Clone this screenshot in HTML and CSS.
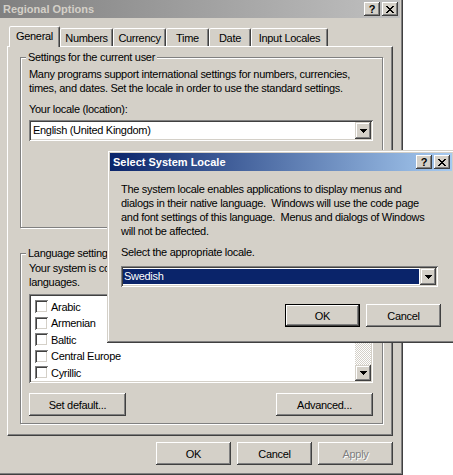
FILE: index.html
```html
<!DOCTYPE html>
<html>
<head>
<meta charset="utf-8">
<title>Regional Options</title>
<link rel="stylesheet" href="styles.css">
</head>
<body>
<div class="win main">
  <div class="title inactive">
    <span class="title-text">Regional Options</span>
    <div class="tbtns">
      <span class="tbtn help">?</span>
      <span class="tbtn close"><svg width="8" height="7" viewBox="0 0 8 7" shape-rendering="crispEdges"><path d="M0 0h2v1h-2zM6 0h2v1h-2zM1 1h2v1h-2zM5 1h2v1h-2zM2 2h4v1h-4zM3 3h2v1h-2zM2 4h4v1h-4zM1 5h2v1h-2zM5 5h2v1h-2zM0 6h2v1h-2zM6 6h2v1h-2z" fill="#000"/></svg></span>
    </div>
  </div>
  <div class="tabs">
    <div class="tab sel t-gen">General</div>
    <div class="tab t-num">Numbers</div>
    <div class="tab t-cur">Currency</div>
    <div class="tab t-time">Time</div>
    <div class="tab t-date">Date</div>
    <div class="tab t-inp">Input Locales</div>
  </div>
  <div class="panel">
    <fieldset class="group g1">
      <legend>Settings for the current user</legend>
      <p class="txt">Many programs support international settings for numbers, currencies,<br>times, and dates. Set the locale in order to use the standard settings.</p>
      <div class="label">Your locale (location):</div>
      <div class="combo">
        <div class="combo-val">English (United Kingdom)</div>
        <div class="dd"><svg width="7" height="4" viewBox="0 0 7 4" shape-rendering="crispEdges"><path d="M0 0h7v1h-7zM1 1h5v1h-5zM2 2h3v1h-3zM3 3h1v1h-1z" fill="#000"/></svg></div>
      </div>
    </fieldset>
    <fieldset class="group g2">
      <legend>Language settings for the system</legend>
      <p class="txt">Your system is configured to read and write documents in multiple<br>languages.</p>
      <div class="list">
        <div class="items">
          <div class="item"><span class="chk"></span>Arabic</div>
          <div class="item"><span class="chk"></span>Armenian</div>
          <div class="item"><span class="chk"></span>Baltic</div>
          <div class="item"><span class="chk"></span>Central Europe</div>
          <div class="item"><span class="chk"></span>Cyrillic</div>
        </div>
        <div class="sb">
          <div class="sbbtn"><svg width="7" height="4" viewBox="0 0 7 4" shape-rendering="crispEdges"><path d="M3 0h1v1h-1zM2 1h3v1h-3zM1 2h5v1h-5zM0 3h7v1h-7z" fill="#000"/></svg></div>
          <div class="thumb"></div>
          <div class="track"></div>
          <div class="sbbtn"><svg width="7" height="4" viewBox="0 0 7 4" shape-rendering="crispEdges"><path d="M0 0h7v1h-7zM1 1h5v1h-5zM2 2h3v1h-3zM3 3h1v1h-1z" fill="#000"/></svg></div>
        </div>
      </div>
      <div class="btnrow">
        <button class="btn wide">Set default...</button>
        <button class="btn wide">Advanced...</button>
      </div>
    </fieldset>
  </div>
  <div class="footer">
    <button class="btn">OK</button>
    <button class="btn">Cancel</button>
    <button class="btn dis">Apply</button>
  </div>
</div>

<div class="win dlg">
  <div class="title active">
    <span class="title-text">Select System Locale</span>
    <div class="tbtns">
      <span class="tbtn help">?</span>
      <span class="tbtn close"><svg width="8" height="7" viewBox="0 0 8 7" shape-rendering="crispEdges"><path d="M0 0h2v1h-2zM6 0h2v1h-2zM1 1h2v1h-2zM5 1h2v1h-2zM2 2h4v1h-4zM3 3h2v1h-2zM2 4h4v1h-4zM1 5h2v1h-2zM5 5h2v1h-2zM0 6h2v1h-2zM6 6h2v1h-2z" fill="#000"/></svg></span>
    </div>
  </div>
  <div class="dbody">
    <p class="txt">The system locale enables applications to display menus and<br>dialogs in their native language.&nbsp; Windows will use the code page<br>and font settings of this language.&nbsp; Menus and dialogs of Windows<br>will not be affected.</p>
    <div class="label dlabel">Select the appropriate locale.</div>
    <div class="combo dcombo">
      <div class="combo-val sel">Swedish</div>
      <div class="dd"><svg width="7" height="4" viewBox="0 0 7 4" shape-rendering="crispEdges"><path d="M0 0h7v1h-7zM1 1h5v1h-5zM2 2h3v1h-3zM3 3h1v1h-1z" fill="#000"/></svg></div>
    </div>
    <div class="dbtns">
      <button class="btn def">OK</button>
      <button class="btn">Cancel</button>
    </div>
  </div>
</div>
</body>
</html>
```
FILE: styles.css
```css
* { box-sizing: border-box; }
html, body { margin: 0; padding: 0; }
body {
  width: 453px;
  height: 475px;
  overflow: hidden;
  position: relative;
  background: #fff;
  font-family: "Liberation Sans", Arial, sans-serif;
  font-size: 11px;
  line-height: 14px;
  letter-spacing: -0.3px;
  color: #000;
}

/* windows */
.win {
  position: absolute;
  background: #d4d0c8;
  padding: 3px;
  display: flex;
  flex-direction: column;
  box-shadow: inset -1px -1px #404040, inset 1px 1px #d4d0c8, inset -2px -2px #808080, inset 2px 2px #fff;
}
.main { left: -3px; top: -3px; width: 406px; height: 478px; }
.dlg { left: 107px; top: 150px; width: 348px; height: 193px; }

.title {
  flex: none;
  height: 18px;
  display: flex;
  align-items: center;
  justify-content: space-between;
  padding: 0 2px 0 3px;
  font-weight: bold;
  letter-spacing: 0;
}
.title.inactive { background: linear-gradient(to right, #808080, #c0c0c0); color: #d4d0c8; }
.title.active { background: linear-gradient(to right, #0a246a, #a6caf0); color: #fff; }
.tbtns { display: flex; }
.tbtn {
  width: 16px;
  height: 14px;
  background: #d4d0c8;
  color: #000;
  display: flex;
  align-items: center;
  justify-content: center;
  box-shadow: inset -1px -1px #404040, inset 1px 1px #fff, inset -2px -2px #808080, inset 2px 2px #d4d0c8;
  font-size: 11px;
  line-height: 11px;
  font-weight: bold;
}
.tbtn.close { margin-left: 2px; }

/* tabs */
.tabs {
  flex: none;
  height: 20px;
  margin-top: 8px;
  padding-left: 9px;
  display: flex;
  align-items: flex-end;
}
.tab {
  height: 18px;
  display: flex;
  align-items: center;
  justify-content: center;
  border: 1px solid;
  border-bottom: 0;
  border-color: #fff #404040 transparent #fff;
  border-radius: 2px 2px 0 0;
  box-shadow: inset -1px 0 #808080;
  background: #d4d0c8;
}
.tab.sel {
  height: 21px;
  margin-bottom: -1px;
  padding-bottom: 2px;
  position: relative;
  z-index: 1;
}
.t-gen { width: 51px; }
.t-num { width: 53px; }
.t-cur { width: 53px; }
.t-time { width: 43px; }
.t-date { width: 42px; }
.t-inp { width: 77px; }

.panel {
  flex: none;
  height: 390px;
  margin: 0 7px;
  padding: 4px 9px 0 12px;
  border-top: 1px solid #fff;
  border-left: 1px solid #fff;
  border-right: 1px solid #404040;
  border-bottom: 1px solid #404040;
  box-shadow: inset -1px -1px #808080;
}

/* group boxes */
.group {
  margin: 0;
  min-width: 0;
  border: 1px solid #808080;
  box-shadow: inset 1px 1px #fff, 1px 1px 0 #fff;
  padding: 3px 9px 86px 8px;
}
.group legend {
  padding: 0 2px;
  margin-left: -3px;
  line-height: 13px;
  background: #d4d0c8;
}
.g2 { margin-top: 19px; padding: 1px 9px 7px 8px; }
.txt { margin: 0; line-height: 14px; }
.label { margin-top: 7px; }

/* combo */
.combo {
  height: 21px;
  margin-top: 4px;
  display: flex;
  padding: 2px;
  background: #fff;
  box-shadow: inset 1px 1px #808080, inset -1px -1px #fff, inset 2px 2px #404040, inset -2px -2px #d4d0c8;
}
.combo-val {
  flex: 1;
  padding-left: 2px;
  line-height: 17px;
}
.combo-val.sel {
  margin: 1px 1px 1px 0;
  line-height: 15px;
  padding-left: 1px;
  background: #0a246a;
  color: #fff;
}
.dd, .sbbtn {
  width: 16px;
  height: 17px;
  flex: none;
  display: flex;
  align-items: center;
  justify-content: center;
  background: #d4d0c8;
  box-shadow: inset -1px -1px #404040, inset 1px 1px #d4d0c8, inset -2px -2px #808080, inset 2px 2px #fff;
}

/* list */
.list {
  margin-top: 5px;
  height: 89px;
  display: flex;
  padding: 2px;
  background: #fff;
  box-shadow: inset 1px 1px #808080, inset -1px -1px #fff, inset 2px 2px #404040, inset -2px -2px #d4d0c8;
}
.items { flex: 1; padding: 2.5px 0 0 4px; }
.item { height: 16.5px; display: flex; align-items: center; }
.chk {
  width: 13px;
  height: 13px;
  margin-right: 3px;
  flex: none;
  background: #fff;
  box-shadow: inset 1px 1px #808080, inset -1px -1px #fff, inset 2px 2px #404040, inset -2px -2px #d4d0c8;
}
.sb { width: 16px; display: flex; flex-direction: column; }
.sbbtn { height: 16px; }
.thumb {
  height: 22px;
  background: #d4d0c8;
  box-shadow: inset -1px -1px #404040, inset 1px 1px #d4d0c8, inset -2px -2px #808080, inset 2px 2px #fff;
}
.track {
  flex: 1;
  background: repeating-conic-gradient(#d4d0c8 0 25%, #fff 0 50%) 0 0 / 2px 2px;
}

/* buttons */
.btn {
  width: 75px;
  height: 23px;
  padding: 0;
  border: 0;
  font: inherit;
  letter-spacing: inherit;
  color: #000;
  background: #d4d0c8;
  box-shadow: inset -1px -1px #404040, inset 1px 1px #fff, inset -2px -2px #808080, inset 2px 2px #d4d0c8;
}
.btn.wide { width: 97px; }
.btn.dis { color: #808080; text-shadow: 1px 1px #fff; }
.btn.def {
  border: 1px solid #000;
  box-shadow: inset -1px -1px #404040, inset 1px 1px #fff, inset -2px -2px #808080;
}
.btnrow {
  margin-top: 10px;
  display: flex;
  justify-content: space-between;
}
.footer {
  margin-top: 6px;
  padding-right: 7px;
  display: flex;
  justify-content: flex-end;
  gap: 6px;
}

/* dialog */
.dbody { padding: 11px 11px 0 11px; }
.dlabel { margin-top: 7px; }
.dcombo { margin-top: 7px; width: 317px; }
.dbtns {
  margin-top: 17px;
  display: flex;
  justify-content: flex-end;
  gap: 6px;
}
```
